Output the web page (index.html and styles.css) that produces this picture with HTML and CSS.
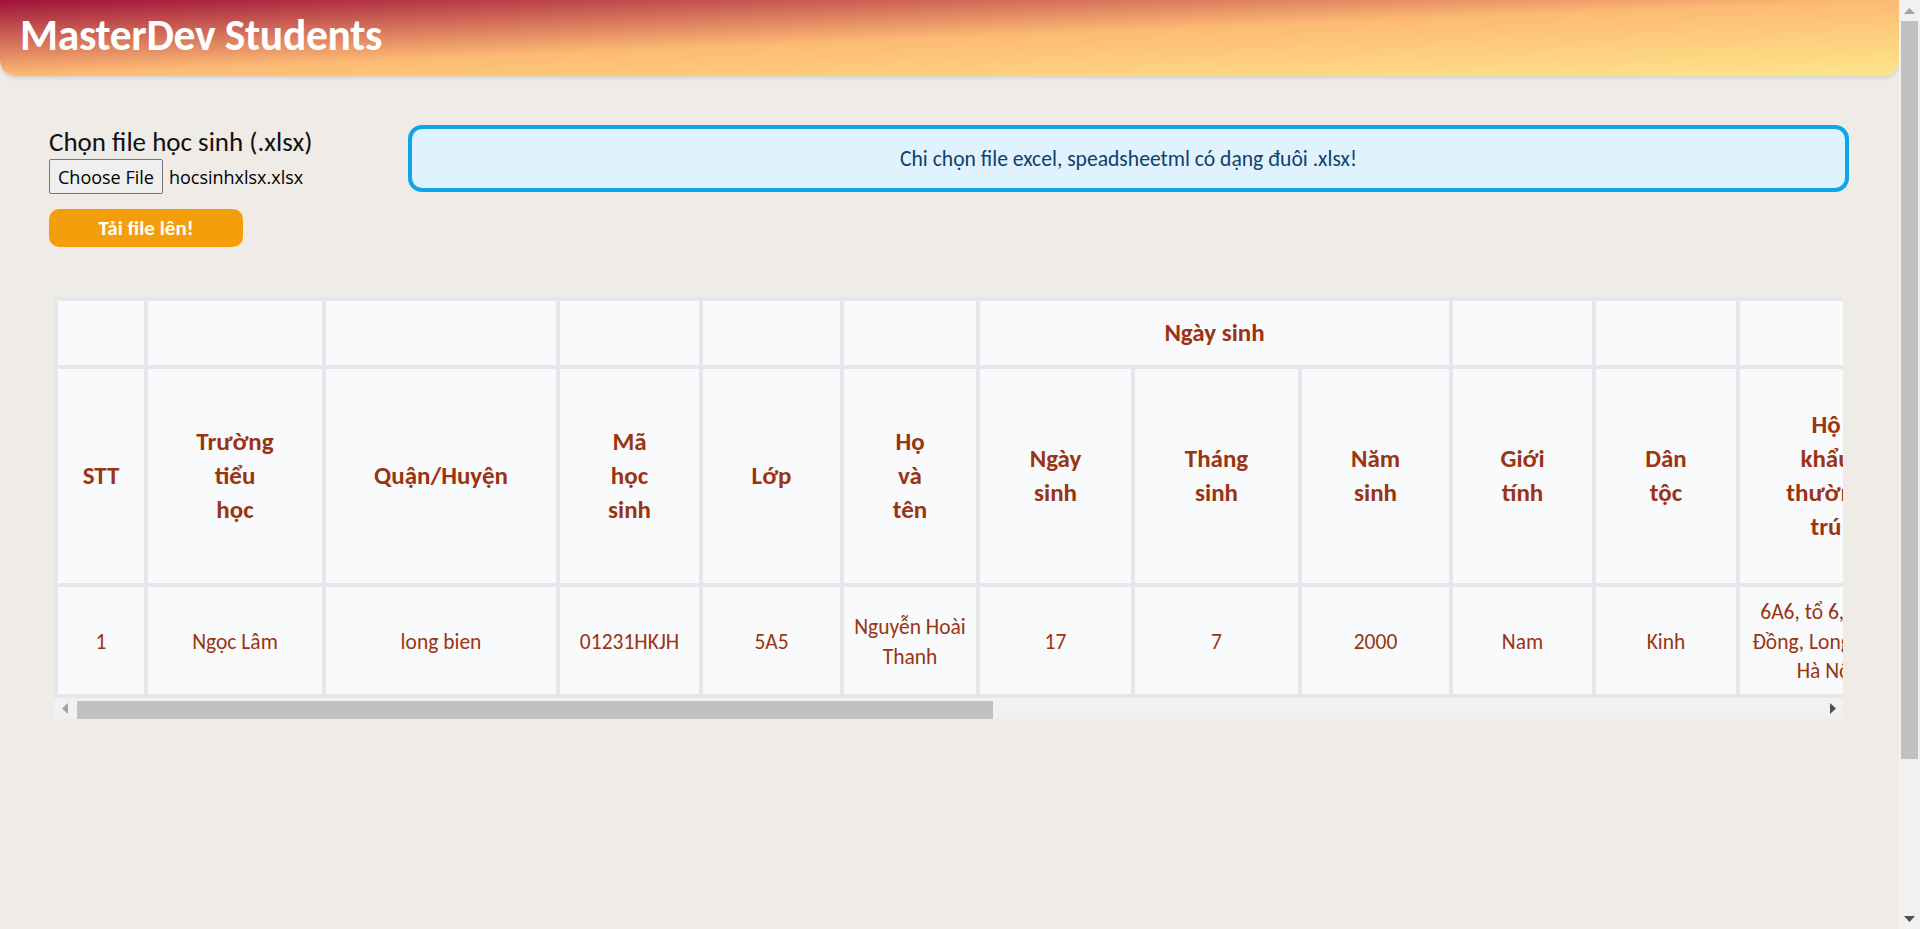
FILE: index.html
```html
<!DOCTYPE html>
<html lang="vi">
<head>
<meta charset="utf-8">
<title>MasterDev Students</title>
<link rel="stylesheet" href="styles.css">
</head>
<body>
<div class="app">
  <header class="topbar">
    <h1 class="brand">MasterDev Students</h1>
  </header>
  <main class="page">
    <section class="upload">
      <form class="upload-form">
        <label class="upload-label">Chọn file học sinh (.xlsx)</label>
        <div class="file-picker">
          <span class="file-btn">Choose File</span>
          <span class="file-name">hocsinhxlsx.xlsx</span>
        </div>
        <button type="button" class="submit-btn">Tải file lên!</button>
      </form>
      <div class="notice">Chi chọn file excel, speadsheetml có dạng đuôi .xlsx!</div>
    </section>

    <div class="table-box">
      <div class="table-wrap">
        <table class="students">
          <colgroup>
            <col class="w-stt"><col class="w-truong"><col class="w-quan"><col class="w-ma">
            <col class="w-lop"><col class="w-ten"><col class="w-ngay"><col class="w-thang">
            <col class="w-nam"><col class="w-gioi"><col class="w-dan"><col class="w-hokhau">
            <col class="w-noio"><col class="w-cha"><col class="w-nncha"><col class="w-sdtcha">
            <col class="w-me"><col class="w-nnme"><col class="w-sdtme"><col class="w-ghichu">
          </colgroup>
          <thead>
            <tr class="group-row">
              <th></th><th></th><th></th><th></th><th></th><th></th>
              <th colspan="3">Ngày sinh</th>
              <th></th><th></th><th></th><th></th><th></th><th></th><th></th><th></th><th></th><th></th><th></th>
            </tr>
            <tr class="label-row">
              <th><span class="lbl">STT</span></th>
              <th><span class="lbl">Trường tiểu học</span></th>
              <th><span class="lbl">Quận/Huyện</span></th>
              <th><span class="lbl">Mã học sinh</span></th>
              <th><span class="lbl">Lớp</span></th>
              <th><span class="lbl">Họ và tên</span></th>
              <th><span class="lbl">Ngày sinh</span></th>
              <th><span class="lbl">Tháng sinh</span></th>
              <th><span class="lbl">Năm sinh</span></th>
              <th><span class="lbl">Giới tính</span></th>
              <th><span class="lbl">Dân tộc</span></th>
              <th><span class="lbl">Hộ khẩu thường trú</span></th>
              <th><span class="lbl">Nơi ở hiện tại</span></th>
              <th><span class="lbl">Họ tên cha</span></th>
              <th><span class="lbl">Nghề nghiệp cha</span></th>
              <th><span class="lbl">Điện thoại cha</span></th>
              <th><span class="lbl">Họ tên mẹ</span></th>
              <th><span class="lbl">Nghề nghiệp mẹ</span></th>
              <th><span class="lbl">Điện thoại mẹ</span></th>
              <th><span class="lbl">Ghi chú</span></th>
            </tr>
          </thead>
          <tbody>
            <tr>
              <td>1</td>
              <td>Ngọc Lâm</td>
              <td>long bien</td>
              <td>01231HKJH</td>
              <td>5A5</td>
              <td>Nguyễn Hoài Thanh</td>
              <td>17</td>
              <td>7</td>
              <td>2000</td>
              <td>Nam</td>
              <td>Kinh</td>
              <td>6A6, tổ 6, Phúc Đồng, Long Biên, Hà Nội</td>
              <td>6A6, tổ 6, Phúc Đồng, Long Biên, Hà Nội</td>
              <td>Nguyễn Văn Hùng</td>
              <td>Kỹ sư</td>
              <td>0912345678</td>
              <td>Trần Thị Lan</td>
              <td>Giáo viên</td>
              <td>0987654321</td>
              <td></td>
            </tr>
          </tbody>
        </table>
      </div>
      <div class="hscroll">
        <span class="sb-btn">
          <svg width="6" height="11" viewBox="0 0 6 11"><path d="M6 0 L0 5.5 L6 11Z" fill="#a3a3a3"/></svg>
        </span>
        <span class="hs-track"><span class="hs-thumb"></span></span>
        <span class="sb-btn">
          <svg width="6" height="11" viewBox="0 0 6 11"><path d="M0 0 L6 5.5 L0 11Z" fill="#505050"/></svg>
        </span>
      </div>
    </div>
  </main>
</div>

<div class="vscroll">
  <span class="sb-btn">
    <svg width="11" height="6" viewBox="0 0 11 6"><path d="M0 6 L5.5 0 L11 6Z" fill="#a3a3a3"/></svg>
  </span>
  <span class="vs-track"><span class="vs-thumb"></span></span>
  <span class="sb-btn">
    <svg width="11" height="6" viewBox="0 0 11 6"><path d="M0 0 L5.5 6 L11 0Z" fill="#505050"/></svg>
  </span>
</div>
</body>
</html>
```

FILE: styles.css
```css
html {
  background: #efebe7;
}

body {
  margin: 0;
  background: #efebe7;
  font-family: Carlito, Calibri, Lato, "Liberation Sans", sans-serif;
  color: #111;
  overflow: hidden;
}

.app {
  margin-right: 21px;
}

/* ---------- header ---------- */
.topbar {
  height: 76px;
  box-sizing: border-box;
  padding: 0 20px 4px;
  display: flex;
  align-items: center;
  background: linear-gradient(to bottom right, #9f1239 0%, #fdba74 50%, #fde68a 100%);
  border-radius: 0 0 16px 16px;
  box-shadow: 0 2px 4px rgba(0, 0, 0, 0.12);
}

.brand {
  margin: 0;
  color: #fff;
  font-size: 43.5px;
  font-weight: 900;
  line-height: 1;
  letter-spacing: -0.3px;
}

/* ---------- main ---------- */
.page {
  padding: 49px 50px 0 49px;
}

.upload {
  display: flex;
  align-items: flex-start;
  gap: 48px;
}

.upload-form {
  width: 311px;
  margin: 0;
  display: flex;
  flex-direction: column;
  align-items: flex-start;
}

.upload-label {
  font-size: 27px;
  line-height: 34px;
  color: #111;
}

.file-picker {
  display: flex;
  align-items: center;
  gap: 6px;
  font-family: "Open Sans", "Noto Sans", sans-serif;
  font-size: 18px;
  color: #000;
}

.file-btn {
  height: 35px;
  box-sizing: border-box;
  padding: 0 8px;
  display: flex;
  align-items: center;
  border: 1px solid #767676;
  border-radius: 2px;
  background: #efefef;
}

.submit-btn {
  margin-top: 15px;
  width: 194px;
  height: 38px;
  border: 0;
  border-radius: 10px;
  background: #f59e0b;
  color: #fff;
  font-family: Carlito, Calibri, Lato, "Liberation Sans", sans-serif;
  font-size: 21px;
  font-weight: 700;
}

.notice {
  flex: 1;
  height: 67px;
  box-sizing: border-box;
  display: flex;
  align-items: center;
  justify-content: center;
  border: 4px solid #0ea5e9;
  border-radius: 14px;
  background: #e0f2fe;
  color: #12406a;
  font-size: 21.6px;
}

/* ---------- table ---------- */
.table-box {
  margin: 50px 6px 0 5px;
}

.table-wrap {
  overflow: hidden;
}

.students {
  table-layout: fixed;
  width: 3414px;
  border-spacing: 4px;
  background: #e5e7eb;
  color: #9a3412;
}

.students th,
.students td {
  box-sizing: border-box;
  background: #f8fafc;
  text-align: center;
  vertical-align: middle;
}

.students th {
  padding: 15px 6px;
  font-size: 25px;
  font-weight: 700;
  line-height: 34px;
}

.group-row th {
  height: 64px;
}

.label-row th {
  height: 214px;
}

.lbl {
  display: inline-block;
  width: min-content;
}

.students td {
  height: 107px;
  padding: 11px 5px 7px;
  font-size: 21.5px;
  line-height: 29.5px;
}

.w-stt { width: 86px; }
.w-truong { width: 174px; }
.w-quan { width: 230px; }
.w-ma { width: 139px; }
.w-lop { width: 137px; }
.w-ten { width: 132px; }
.w-ngay { width: 151px; }
.w-thang { width: 163px; }
.w-nam { width: 147px; }
.w-gioi { width: 139px; }
.w-dan { width: 140px; }
.w-hokhau { width: 172px; }
.w-noio { width: 232px; }
.w-cha { width: 200px; }
.w-nncha { width: 180px; }
.w-sdtcha { width: 170px; }
.w-me { width: 200px; }
.w-nnme { width: 180px; }
.w-sdtme { width: 170px; }
.w-ghichu { width: 188px; }

/* ---------- scrollbars (drawn) ---------- */
.sb-btn {
  flex: none;
  width: 21px;
  height: 21px;
  display: flex;
  align-items: center;
  justify-content: center;
}

.hscroll {
  display: flex;
  height: 21px;
  background: #f1f1f1;
}

.hs-track {
  flex: 1;
  display: flex;
  align-items: flex-end;
  padding-left: 2px;
}

.hs-thumb {
  width: 916px;
  height: 18px;
  background: #c1c1c1;
}

.vscroll {
  position: fixed;
  top: 0;
  right: 0;
  width: 21px;
  height: 100vh;
  display: flex;
  flex-direction: column;
  background: #f1f1f1;
}

.vs-track {
  flex: 1;
  display: flex;
  justify-content: center;
}

.vs-thumb {
  width: 17px;
  height: 738px;
  background: #c1c1c1;
}
```
